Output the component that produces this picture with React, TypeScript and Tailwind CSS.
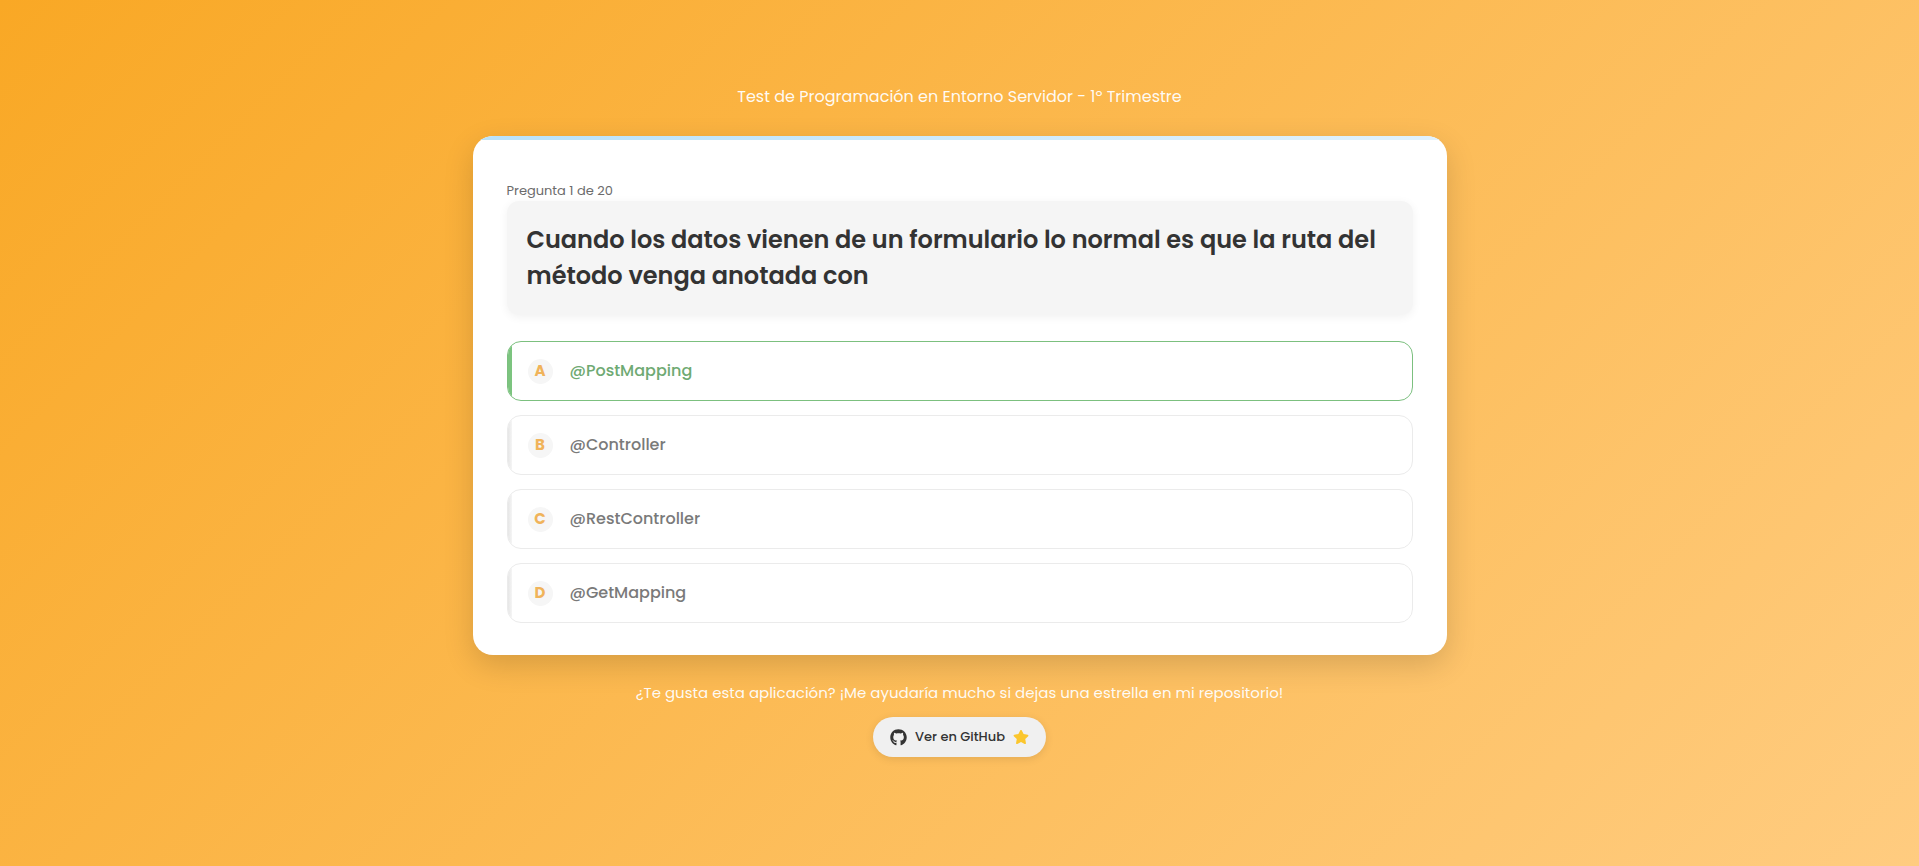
import { FaGithub, FaStar } from 'react-icons/fa'

const TOTAL = 20

const QUESTION = {
  number: 1,
  text: 'Cuando los datos vienen de un formulario lo normal es que la ruta del método venga anotada con',
  options: [
    { letter: 'A', text: '@PostMapping', correct: true },
    { letter: 'B', text: '@Controller', correct: false },
    { letter: 'C', text: '@RestController', correct: false },
    { letter: 'D', text: '@GetMapping', correct: false },
  ],
}

function Option({ letter, text, correct }: { letter: string; text: string; correct: boolean }) {
  return (
    <button
      type="button"
      className={`relative flex w-full items-center gap-[17px] overflow-hidden rounded-[14px] border bg-white py-4 pr-4 pl-5 text-left font-medium ${
        correct ? 'border-[#7cc07f] text-[#6faa73]' : 'border-[#ebebeb] text-[#7a7a7a]'
      }`}
    >
      <span
        className={`absolute inset-y-0 left-0 w-1 ${
          correct ? 'bg-[#7cc47f]' : 'bg-linear-to-r from-[#e6e6e6] to-[#f5f5f5]'
        }`}
      />
      <span className="flex size-[25px] shrink-0 items-center justify-center rounded-full bg-[#f6f6f6] text-[15px] font-bold text-[#f0b35a]">
        {letter}
      </span>
      <span className="text-base leading-[26px]">{text}</span>
    </button>
  )
}

export default function App() {
  return (
    <div className="flex min-h-screen flex-col items-center justify-center bg-linear-[135deg,#f9a825,#ffcc80] px-4 font-['Poppins','Inter',sans-serif]">
      <h1 className="text-center text-base leading-6 text-white/95">
        Test de Programación en Entorno Servidor - 1º Trimestre
      </h1>

      <main className="relative mt-[27px] w-full max-w-[974px] overflow-hidden rounded-[20px] bg-white px-[34px] pt-[45px] pb-8 shadow-[0_10px_30px_rgba(0,0,0,0.15)]">
        <div className="absolute inset-x-0 top-0 h-1 bg-linear-to-r from-[#b9e2fb] to-[#e1f2fd]" />
        <p className="text-[13px] leading-5 text-[#6b6b6b]">
          Pregunta {QUESTION.number} de {TOTAL}
        </p>
        <h2 className="rounded-xl bg-[#f5f5f5] px-5 py-[21px] text-2xl leading-9 font-semibold text-[#333] shadow-[0_2px_10px_rgba(0,0,0,0.06)]">
          {QUESTION.text}
        </h2>
        <div className="mt-[26px] flex flex-col gap-[14px]">
          {QUESTION.options.map(o => (
            <Option key={o.letter} {...o} />
          ))}
        </div>
      </main>

      <footer className="mt-[26px] flex flex-col items-center gap-3 pb-6 text-center">
        <p className="text-[15px] leading-6 text-white/95">
          ¿Te gusta esta aplicación? ¡Me ayudaría mucho si dejas una estrella en mi repositorio!
        </p>
        <a
          href="https://github.com"
          className="flex h-10 items-center gap-2 rounded-full bg-[#f0f0f0] px-[17px] text-[13px] font-medium text-[#333] shadow-[0_2px_8px_rgba(0,0,0,0.1)]"
        >
          <FaGithub className="size-[17px]" />
          Ver en GitHub
          <FaStar className="size-4 text-[#fbc62d]" />
        </a>
      </footer>
    </div>
  )
}
